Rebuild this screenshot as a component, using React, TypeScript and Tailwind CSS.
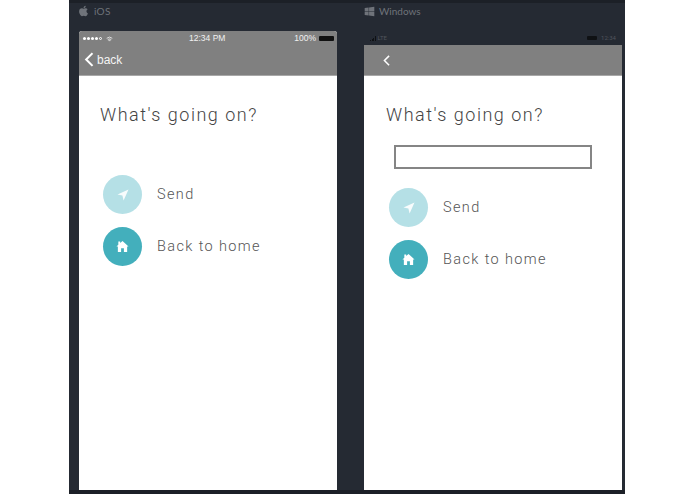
import React from "react";
import { FaApple, FaWindows } from "react-icons/fa";

function Chevron({ className, sw }: { className: string; sw: number }) {
  return (
    <svg viewBox="0 0 10 16" className={className} fill="none" stroke="currentColor" strokeWidth={sw} strokeLinecap="square">
      <path d="M8 2 L2 8 L8 14" />
    </svg>
  );
}

function Action({ light, label, icon }: { light?: boolean; label: string; icon: React.ReactNode }) {
  return (
    <div className="flex items-center h-[39px]">
      <div className={`w-[39px] h-[39px] rounded-full flex items-center justify-center shrink-0 ${light ? "bg-[#b5e0e6]" : "bg-[#43afbc]"}`}>
        {icon}
      </div>
      <span className="ml-[15px] pt-[2px] text-[14.5px] leading-none font-light tracking-[1.38px] text-[#555]">{label}</span>
    </div>
  );
}

const SendIcon = (
  <svg viewBox="0 0 12 12" className="w-[12px] h-[12px] text-white/90" fill="currentColor">
    <path d="M11.5 0.5 L0.5 5.5 L5.4 6.6 L6.6 11.5 Z" />
  </svg>
);
const HomeIcon = (
  <svg viewBox="0 0 14 14" className="w-[13px] h-[13px] text-white" fill="currentColor">
    <path d="M7 1 L13.5 7 L12 7 L12 13 L8.5 13 L8.5 9 L5.5 9 L5.5 13 L2 13 L2 7 L0.5 7 L2.5 5 L2.5 1.5 L4.5 1.5 L4.5 3.3 Z" />
  </svg>
);

function Actions() {
  return (
    <div className="flex flex-col gap-[13px]">
      <Action light label="Send" icon={SendIcon} />
      <Action label="Back to home" icon={HomeIcon} />
    </div>
  );
}

function Title() {
  return <h1 className="text-[18px] leading-[22px] font-light tracking-[1.5px] text-[#444]">What's going on?</h1>;
}

export default function App() {
  return (
    <div className="w-[695px] h-[494px] bg-white overflow-hidden antialiased font-['Roboto',sans-serif]">
      <div className="ml-[69px] w-[556px] h-[494px] bg-[#252a33] border-t-[3px] border-b-[4px] border-[#1c2027] flex gap-[27px] pl-[10px]">
        {/* iOS */}
        <div className="w-[258px] flex flex-col h-[487px]">
          <div className="h-[28px] flex items-start text-[#6f737a]">
            <div className="flex items-center h-[14px] mt-[1px] -ml-[1px]">
              <FaApple className="w-[11px] h-[12px]" />
              <span className="ml-[5px] text-[10px] leading-none font-['Lato',sans-serif] tracking-[0.3px]">iOS</span>
            </div>
          </div>
          <div className="flex-1 flex flex-col rounded-t-[3px] overflow-hidden bg-white">
            <div className="h-[45px] bg-[#808080] border-b-[1px] border-[#a8a8a8] flex flex-col text-white">
              <div className="h-[15px] pl-[4px] pr-[3px] flex items-center justify-between text-[8.5px] leading-none font-['Liberation_Sans',sans-serif] text-[#f0f0f0] relative">
                <div className="flex items-center gap-[1px]">
                  <span className="w-[3px] h-[3px] rounded-full bg-white" />
                  <span className="w-[3px] h-[3px] rounded-full bg-white" />
                  <span className="w-[3px] h-[3px] rounded-full bg-white" />
                  <span className="w-[3px] h-[3px] rounded-full bg-white" />
                  <span className="w-[3px] h-[3px] rounded-full border-[0.5px] border-white" />
                  <svg viewBox="0 0 10 8" className="ml-[3px] w-[7px] h-[6px]" fill="none" stroke="white" strokeWidth="1">
                    <path d="M1 3 Q5 -0.5 9 3 M2.5 4.8 Q5 2.8 7.5 4.8 M5 7 L4 6 Q5 5.3 6 6 Z" />
                  </svg>
                </div>
                <span className="absolute left-[110px]">12:34 PM</span>
                <div className="flex items-center gap-[3px]">
                  <span>100%</span>
                  <span className="w-[15px] h-[5px] bg-[#111] rounded-[1px]" />
                </div>
              </div>
              <div className="flex-1 flex items-center pl-[5px] pb-[2px]">
                <Chevron className="w-[10px] h-[15px] text-white" sw={2.2} />
                <span className="ml-[3px] text-[12px] leading-none font-['Liberation_Sans',sans-serif] text-[#f4f4f4]">back</span>
              </div>
            </div>
            <div className="flex-1 pl-[21px] pt-[28px]">
              <Title />
              <div className="mt-[49px] ml-[3px]">
                <Actions />
              </div>
            </div>
          </div>
        </div>
        {/* Windows */}
        <div className="w-[258px] flex flex-col h-[487px]">
          <div className="h-[28px] flex items-start text-[#6f737a]">
            <div className="flex items-center h-[14px] mt-[1px]">
              <FaWindows className="w-[11px] h-[11px]" />
              <span className="ml-[4px] text-[10px] leading-none font-['Lato',sans-serif]">Windows</span>
            </div>
          </div>
          <div className="h-[14px] flex items-center justify-between pl-[6px] pr-[6px] text-[6px] leading-none text-[#50545b]">
            <div className="flex items-center gap-[2px]">
              <div className="flex items-end gap-[0.5px] h-[5px]">
                <span className="w-[1px] h-[1px] bg-[#0f1114]" />
                <span className="w-[1px] h-[2px] bg-[#0f1114]" />
                <span className="w-[1px] h-[3px] bg-[#0f1114]" />
                <span className="w-[1px] h-[5px] bg-[#0f1114]" />
              </div>
              <span>LTE</span>
            </div>
            <div className="flex items-center gap-[4px]">
              <span className="w-[10px] h-[4px] bg-[#0f1114] rounded-[1px]" />
              <span>12:34</span>
            </div>
          </div>
          <div className="flex-1 flex flex-col bg-white">
            <div className="h-[31px] bg-[#808080] border-b-[1px] border-[#a8a8a8] flex items-center pl-[19px]">
              <Chevron className="w-[7px] h-[11px] text-white" sw={2.2} />
            </div>
            <div className="flex-1 pl-[22px] pt-[28px]">
              <Title />
              <div className="mt-[19px] ml-[8px] w-[198px] h-[24px] border-2 border-[#858585] bg-white" />
              <div className="mt-[19px] ml-[3px]">
                <Actions />
              </div>
            </div>
          </div>
        </div>
      </div>
    </div>
  );
}
